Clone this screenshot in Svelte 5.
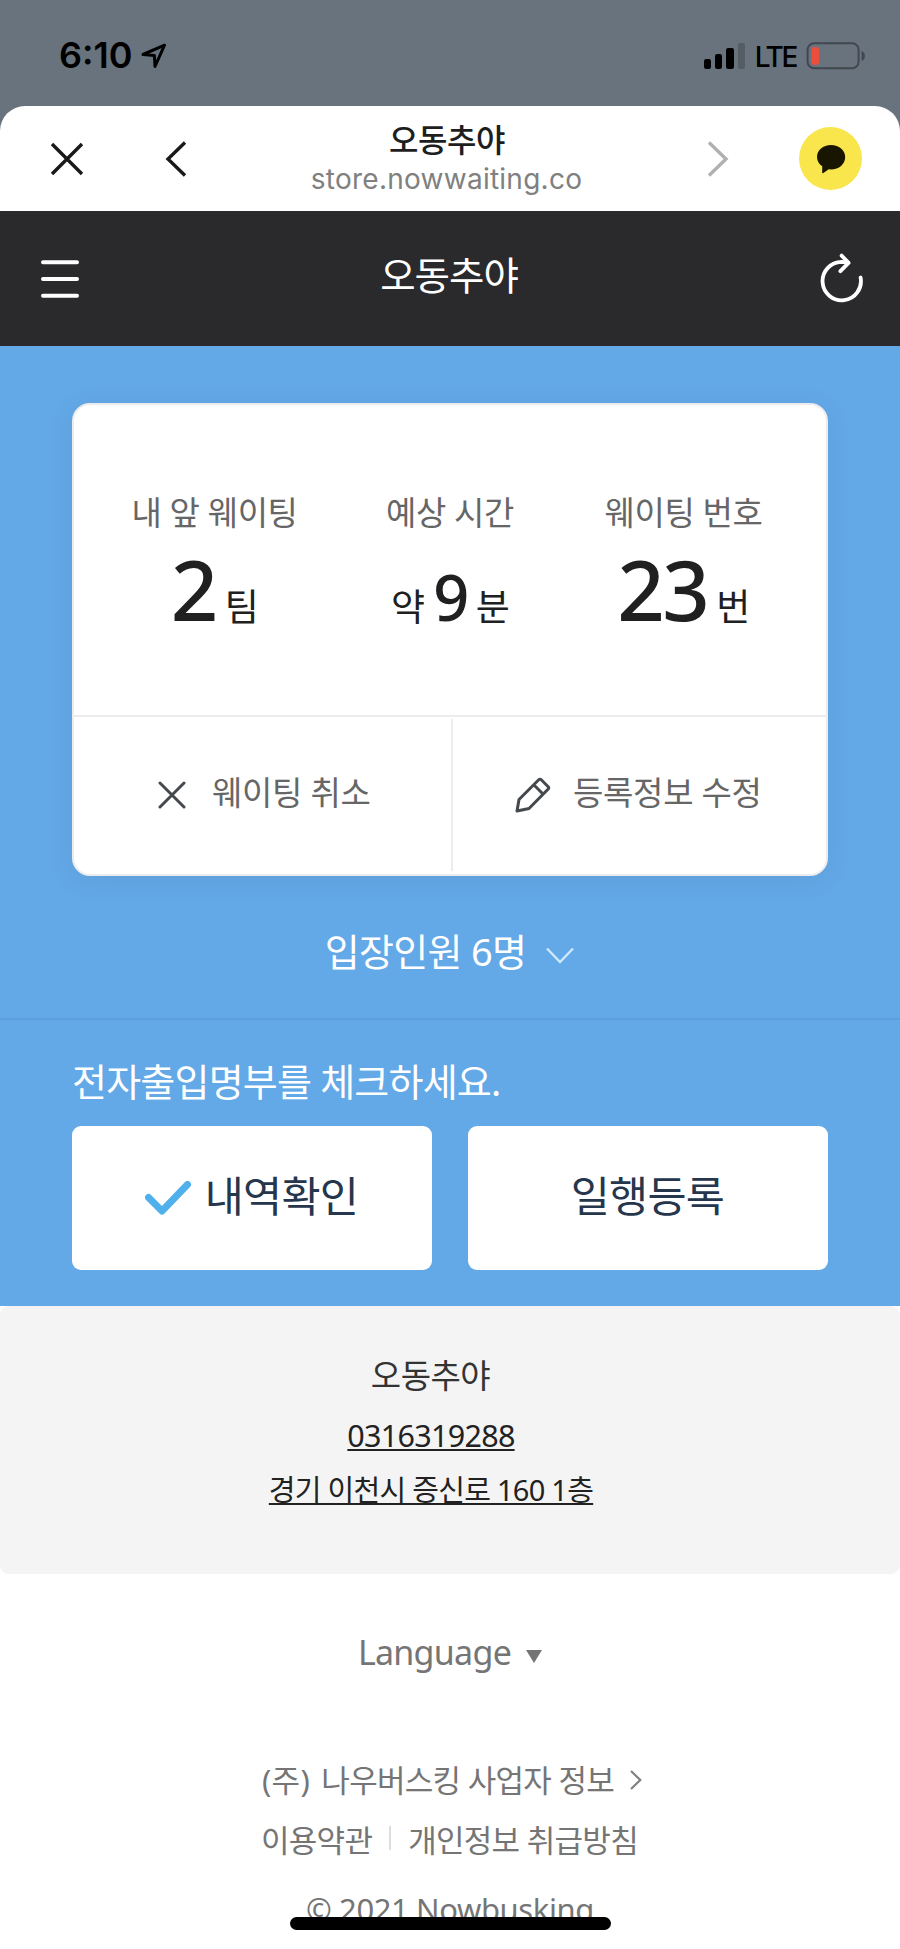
<script lang="ts">
	type Stat = {
		label: string;
		prefix?: string;
		value: number;
		unit: string;
		compact?: boolean;
	};

	const store = {
		name: '오동추야',
		host: 'store.nowwaiting.co',
		phone: '0316319288',
		address: '경기 이천시 증신로 160 1층',
	};

	const stats: Stat[] = [
		{ label: '내 앞 웨이팅', value: 2, unit: '팀' },
		{ label: '예상 시간', prefix: '약', value: 9, unit: '분', compact: true },
		{ label: '웨이팅 번호', value: 23, unit: '번' },
	];

	const partySize = 6;
	const signal = [10, 15, 21, 26];
</script>

<div class="screen">
	<div class="status">
		<span class="clock">6:10</span>
		<svg class="location" width="26" height="26" viewBox="0 0 26 26">
			<path d="M2 11.5 L23.5 2.2 L14 23.5 L13.4 12.4 Z" />
		</svg>
		<div class="signal">
			{#each signal as height, i}
				<i class:off={i === 3} style="height: {height}px"></i>
			{/each}
		</div>
		<span class="network">LTE</span>
		<svg class="battery" width="60" height="28" viewBox="0 0 60 28">
			<rect x="1.6" y="1.2" width="51" height="25" rx="6.5" fill="none" stroke="#40474e" stroke-width="2" />
			<rect x="5.5" y="5" width="7.5" height="18" rx="3" fill="#eb4e3d" />
			<path d="M55.6 9 C60 10.5 60 17.5 55.6 19 Z" fill="#40474e" />
		</svg>
	</div>

	<div class="sheet">
		<header class="browser">
			<svg class="close" width="34" height="34" viewBox="0 0 34 34">
				<path d="M2 2 L32 32 M32 2 L2 32" />
			</svg>
			<svg class="back" width="22" height="36" viewBox="0 0 22 36">
				<path d="M20 1.5 L3 18 L20 34.5" />
			</svg>
			<div class="page">
				<div class="page-title">{store.name}</div>
				<div class="page-host">{store.host}</div>
			</div>
			<svg class="forward" width="22" height="36" viewBox="0 0 22 36">
				<path d="M2 1.5 L19 18 L2 34.5" />
			</svg>
			<div class="talk">
				<svg width="30" height="30" viewBox="0 0 30 30">
					<path
						d="M15 1 C7 1 1 6 1 13 C1 17 3 20 6.2 22.3 L6.2 28.6 C6.2 29.4 7 29.4 7.4 29 L12.8 25.3 L15 25.5 C23 25.5 29.2 20 29.2 13 C29.2 6 23 1 15 1 Z"
						fill="#191600"
					/>
				</svg>
			</div>
		</header>

		<nav class="topbar">
			<svg width="38" height="40" viewBox="0 0 38 40">
				<path d="M2 3.3 H36 M2 20 H36 M2 36.7 H36" stroke-width="4" />
			</svg>
			<h1>{store.name}</h1>
			<svg width="44" height="52" viewBox="0 0 44 52">
				<path d="M41.6 24.5 A19.2 19.2 0 1 1 22.5 8.9 L29 9.6" stroke-width="3.8" />
				<path d="M22.6 2.6 L29.6 9.9 L21.4 18.2" stroke-width="3.8" />
			</svg>
		</nav>

		<main>
			<section class="card">
				<div class="stats">
					{#each stats as stat}
						<div class="stat">
							<div class="label">{stat.label}</div>
							<div class="figure">
								{#if stat.prefix}<span class="unit">{stat.prefix}</span>{/if}
								<strong class:compact={stat.compact}>{stat.value}</strong>
								<span class="unit">{stat.unit}</span>
							</div>
						</div>
					{/each}
				</div>
				<div class="actions">
					<button class="action cancel">
						<svg width="28" height="28" viewBox="0 0 28 28">
							<path d="M2 2 L26 26 M26 2 L2 26" stroke-linecap="round" />
						</svg>
						<span>웨이팅 취소</span>
					</button>
					<button class="action edit">
						<svg width="36" height="36" viewBox="0 0 36 36">
							<path
								d="M2 34 L4 22.5 L23.5 3 Q25 1.5 26.5 3 L33.2 9.7 Q34.3 11 33 12.3 L14 31.5 Z M19 8 L28 17"
								stroke-linejoin="round"
							/>
						</svg>
						<span>등록정보 수정</span>
					</button>
				</div>
			</section>

			<div class="party">
				<span>입장인원 {partySize}명</span>
				<svg width="28" height="17" viewBox="0 0 28 17">
					<path d="M1 1.5 L14 15 L27 1.5" />
				</svg>
			</div>

			<section class="checkin">
				<p>전자출입명부를 체크하세요.</p>
				<div class="buttons">
					<button>
						<svg width="46" height="34" viewBox="0 0 46 34">
							<path d="M3.5 16.5 L17 30 L42.5 3.5" />
						</svg>
						<span>내역확인</span>
					</button>
					<button><span>일행등록</span></button>
				</div>
			</section>
		</main>

		<section class="store">
			<div class="store-name">{store.name}</div>
			<a class="phone" href="tel:{store.phone}">{store.phone}</a>
			<a class="address" href="#map">{store.address}</a>
		</section>

		<footer>
			<div class="language">
				<span>Language</span>
				<i></i>
			</div>
			<div class="company">
				<span><span class="corp">(주)</span> 나우버스킹 사업자 정보</span>
				<svg width="12" height="20" viewBox="0 0 12 20">
					<path d="M1 1 L10.3 10 L1 19" />
				</svg>
			</div>
			<div class="terms">
				<span>이용약관</span>
				<i></i>
				<span>개인정보 취급방침</span>
			</div>
			<div class="copyright">© 2021 Nowbusking</div>
		</footer>
	</div>

	<div class="home-bar"></div>
</div>

<style>
	:global(body) {
		background: #fff;
	}
	.screen {
		position: relative;
		width: 900px;
		height: 1949px;
		overflow: hidden;
		background: linear-gradient(#69737d 140px, #fff 140px);
		font-family: 'Noto Sans', 'Noto Sans CJK KR', sans-serif;
		letter-spacing: -0.72px;
		white-space: nowrap;
	}
	svg {
		display: block;
		flex: none;
		fill: none;
	}
	button {
		display: flex;
		align-items: center;
		padding: 0;
		border: none;
		background: none;
		font: inherit;
		letter-spacing: inherit;
	}

	/* status bar */
	.status {
		display: flex;
		align-items: center;
		height: 106px;
		padding: 5px 34px 0 59px;
		box-sizing: border-box;
		font-family: Inter, sans-serif;
		color: #000;
	}
	.clock {
		margin-bottom: 2px;
		font-size: 36px;
		font-weight: 600;
		letter-spacing: 0;
	}
	.location {
		margin-left: 9px;
		stroke: #000;
		stroke-width: 3;
		stroke-linejoin: round;
	}
	.signal {
		display: flex;
		align-items: flex-end;
		gap: 4px;
		height: 26px;
		margin-left: auto;
	}
	.signal i {
		width: 7.3px;
		border-radius: 2.2px;
		background: #000;
	}
	.signal .off {
		background: #545c64;
	}
	.network {
		margin: 2px 10px 0 10px;
		font-size: 28px;
		font-weight: 500;
		letter-spacing: -2.4px;
	}

	/* in-app browser bar */
	.browser {
		display: flex;
		align-items: center;
		height: 105px;
		border-radius: 25px 25px 0 0;
		padding: 0 38px 0 50px;
		box-sizing: border-box;
		background: #fff;
	}
	.close,
	.back {
		stroke: #191919;
		stroke-width: 3.4;
	}
	.back {
		margin-left: 81px;
	}
	.page {
		flex: 1;
		text-align: center;
		padding: 2px 1px 0 0;
	}
	.page-title {
		padding-left: 1px;
		font-size: 32px;
		font-weight: 500;
		line-height: 38px;
		letter-spacing: -0.4px;
		color: #1e1e1e;
	}
	.page-host {
		font-family: Inter, sans-serif;
		font-size: 28px;
		line-height: 40px;
		letter-spacing: 0.25px;
		color: #808080;
	}
	.forward {
		margin-right: 70px;
		stroke: #b0b0b0;
		stroke-width: 3.4;
	}
	.talk {
		display: grid;
		place-items: center;
		width: 63px;
		height: 63px;
		border-radius: 50%;
		background: #f9e54c;
	}

	.topbar {
		display: flex;
		align-items: center;
		justify-content: space-between;
		height: 135px;
		padding: 0 37px 0 41px;
		box-sizing: border-box;
		background: #2a2a2c;
	}
	.topbar svg {
		stroke: #fff;
		stroke-linecap: round;
		stroke-linejoin: round;
	}
	.topbar h1 {
		margin: 0 0 8px;
		font-size: 38.5px;
		font-weight: 400;
		line-height: 50px;
		letter-spacing: -1px;
		color: #fff;
	}

	main {
		height: 960px;
		padding-top: 57px;
		box-sizing: border-box;
		background: #63a8e7;
	}

	/* waiting card */
	.card {
		height: 473px;
		margin: 0 72px;
		border: 2px solid #ececee;
		border-radius: 18px;
		box-sizing: border-box;
		background: #fff;
		box-shadow: 0 4px 24px rgba(60, 90, 130, 0.11);
	}
	.stats {
		display: grid;
		grid-template-columns: 281px 190px 277px;
		height: 312px;
		padding-top: 85px;
		border-bottom: 2px solid #ececee;
		box-sizing: border-box;
	}
	.stat {
		text-align: center;
	}
	.label {
		font-size: 33px;
		line-height: 46px;
		letter-spacing: -0.4px;
		color: #666;
	}
	.figure {
		display: flex;
		align-items: baseline;
		justify-content: center;
		height: 90px;
		margin-top: 8px;
		gap: 9px;
		line-height: 90px;
		color: #202020;
	}
	.unit {
		font-size: 37px;
	}
	strong {
		font-size: 83px;
		font-weight: 500;
		letter-spacing: -2.5px;
	}
	/* taller line keeps the smaller digit on the same baseline */
	.compact {
		font-size: 63px;
		line-height: 105px;
	}
	.actions {
		display: grid;
		grid-template-columns: 379px 1fr;
		height: 157px;
	}
	.action {
		font-size: 33px;
		line-height: 46px;
		letter-spacing: -0.3px;
		color: #666;
	}
	.action svg {
		stroke: #45484d;
		stroke-width: 3;
	}
	.action span {
		margin-bottom: 5px;
	}
	.cancel {
		gap: 26px;
		padding-left: 84px;
		border-right: 2px solid #ececee;
		height: 152px;
		margin-top: 2px;
	}
	.edit {
		gap: 22px;
		padding-left: 62px;
		padding-bottom: 1px;
	}

	.party {
		display: flex;
		align-items: center;
		justify-content: center;
		gap: 20px;
		height: 144px;
		padding: 4px 1px 0 0;
		border-bottom: 2px solid #5c9fdd;
		box-sizing: border-box;
		font-size: 38px;
		color: #fff;
	}
	.party svg {
		margin-top: 13px;
		stroke: #cfe8fb;
		stroke-width: 2.4;
	}

	.checkin {
		padding: 36px 72px 0;
	}
	.checkin p {
		margin: 0;
		font-size: 38px;
		line-height: 50px;
		letter-spacing: -0.8px;
		color: #fff;
	}
	.buttons {
		display: grid;
		grid-template-columns: 1fr 1fr;
		gap: 36px;
		margin-top: 20px;
	}
	.buttons button {
		justify-content: center;
		gap: 14px;
		height: 144px;
		padding: 0 1px 9px 0;
		border-radius: 9px;
		background: #fff;
		font-size: 42.5px;
		color: #25364d;
	}
	.buttons svg {
		margin-top: 9px;
		stroke: #50b0ec;
		stroke-width: 7;
		stroke-linecap: round;
		stroke-linejoin: round;
	}

	.store {
		display: flex;
		flex-direction: column;
		align-items: center;
		height: 268px;
		padding: 46px 38px 0 0;
		border-radius: 9px;
		box-sizing: border-box;
		background: #f4f4f4;
		color: #222;
	}
	.store-name {
		padding-right: 1px;
		font-size: 33px;
		line-height: 48px;
		letter-spacing: -0.5px;
		color: #333;
	}
	.store a {
		color: inherit;
		text-decoration: underline;
		text-decoration-thickness: 2px;
		text-decoration-skip-ink: none;
		text-underline-offset: 2px;
	}
	.phone {
		margin-top: 11px;
		font-size: 30.5px;
		line-height: 48px;
	}
	.address {
		margin-top: 7px;
		font-size: 29px;
		line-height: 48px;
	}

	footer {
		color: #757575;
	}
	.language {
		display: flex;
		align-items: center;
		justify-content: center;
		gap: 15px;
		height: 50px;
		margin-top: 53px;
		font-size: 34px;
	}
	.language i {
		margin-top: 8px;
		border: 8px solid transparent;
		border-top: 13px solid #757575;
		border-bottom: none;
	}
	.company {
		display: flex;
		align-items: center;
		gap: 16px;
		height: 50px;
		margin: 76px 0 0 262px;
		font-size: 31px;
	}
	.corp {
		margin-right: 4px;
		letter-spacing: 0.3px;
	}
	.company svg {
		margin-top: 3px;
		stroke: #808080;
		stroke-width: 2.2;
	}
	.terms {
		display: flex;
		align-items: center;
		height: 50px;
		margin: 10px 0 0 261px;
		font-size: 31px;
	}
	.terms i {
		width: 2px;
		height: 24px;
		margin: 0 17px;
		background: #ddd;
	}
	.copyright {
		margin-top: 21px;
		font-size: 31px;
		line-height: 50px;
		letter-spacing: -0.4px;
		text-align: center;
	}

	.home-bar {
		position: absolute;
		left: 290px;
		top: 1917px;
		width: 321px;
		height: 13px;
		border-radius: 7px;
		background: #000;
	}
</style>
